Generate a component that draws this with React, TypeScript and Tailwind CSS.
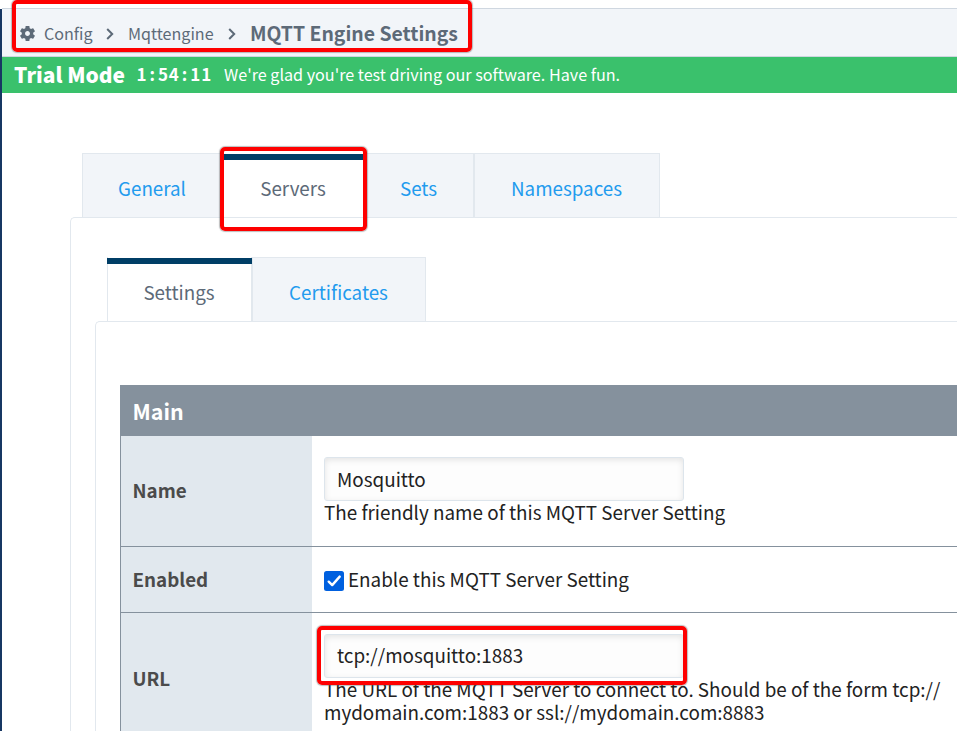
import React from "react";

const SANS = "font-['Noto_Sans_CJK_SC',sans-serif]";

function Gear() {
  return (
    <svg viewBox="0 0 24 24" className="-ml-px h-[19px] w-[19px] shrink-0" fill="#5d6a78">
      <path d="M19.14 12.94c.04-.3.06-.61.06-.94 0-.32-.02-.64-.07-.94l2.03-1.58c.18-.14.23-.41.12-.61l-1.92-3.32c-.12-.22-.37-.29-.59-.22l-2.39.96c-.5-.38-1.03-.7-1.62-.94l-.36-2.54c-.04-.24-.24-.41-.48-.41h-3.84c-.24 0-.43.17-.47.41l-.36 2.54c-.59.24-1.13.57-1.62.94l-2.39-.96c-.22-.08-.47 0-.59.22L2.74 8.87c-.12.21-.08.47.12.61l2.03 1.58c-.05.3-.09.63-.09.94s.02.64.07.94l-2.03 1.58c-.18.14-.23.41-.12.61l1.92 3.32c.12.22.37.29.59.22l2.39-.96c.5.38 1.03.7 1.62.94l.36 2.54c.05.24.24.41.48.41h3.84c.24 0 .44-.17.47-.41l.36-2.54c.59-.24 1.13-.56 1.62-.94l2.39.96c.22.08.47 0 .59-.22l1.92-3.32c.12-.22.07-.47-.12-.61l-2.01-1.58zM12 15.1c-1.7 0-3.1-1.4-3.1-3.1s1.4-3.1 3.1-3.1 3.1 1.4 3.1 3.1-1.4 3.1-3.1 3.1z" />
    </svg>
  );
}

function Chevron() {
  return (
    <svg viewBox="0 0 8 12" className="h-3 w-2 shrink-0" fill="none" stroke="#5d6a78" strokeWidth="2">
      <path d="M1.2 1 L6.2 6 L1.2 11" />
    </svg>
  );
}

function Tab({ label, width, active = false }: { label: string; width: string; active?: boolean }) {
  return (
    <div
      className={`${width} flex h-16 shrink-0 flex-col items-center border-x border-[#e2e8ee] text-[18.8px] ${
        active ? "bg-white text-[#5d6a78]" : "border-t bg-[#f2f5f9] text-[#229bee]"
      }`}
    >
      <div className={active ? "mt-px h-1.5 w-[calc(100%+2px)] bg-[#003e66]" : "h-1.5 w-full"} />
      <div className="mt-4 pr-px leading-6 whitespace-nowrap">{label}</div>
    </div>
  );
}

function Field({ value, leading }: { value: string; leading: string }) {
  return (
    <div
      className={`${leading} h-11 w-[360px] rounded-[3px] border border-[#dde5ec] bg-[#fdfdfd] pl-3 text-[18.85px] shadow-[inset_0_2px_6px_rgba(0,0,0,0.1)]`}
    >
      {value}
    </div>
  );
}

function Label({ children }: { children: React.ReactNode }) {
  return (
    <div className="flex w-[191px] shrink-0 items-center bg-[#e1e8ee] pb-px pl-[11.5px] text-[18.8px] font-bold text-[#4b4b4b]">
      {children}
    </div>
  );
}

export default function App() {
  return (
    <div className={`${SANS} relative h-[731px] w-[957px] overflow-hidden bg-white pt-2 text-[#222]`}>
      <div className="flex h-[723px]">
        <div className="mt-px w-0.5 shrink-0 bg-[#173763]" />
        <div className="w-[955px] shrink-0">
          <header className="flex h-[49px] items-center border-y border-[#cfd7e0] bg-[#f2f5f9] pt-[2px] pl-[17px] text-[#5d6a78]">
            <Gear />
            <span className="ml-[7px] w-[48px] text-[16.1px] whitespace-nowrap">Config</span>
            <span className="ml-[14px] flex"><Chevron /></span>
            <span className="ml-[14px] w-[87px] text-[16.1px] whitespace-nowrap">Mqttengine</span>
            <span className="ml-[13px] flex"><Chevron /></span>
            <span className="ml-[14px] pb-0.5 text-[19.4px] font-bold whitespace-nowrap">MQTT Engine Settings</span>
          </header>

          <div className="flex h-9 items-center bg-[#3ac16c] pb-0.5 pl-3 whitespace-nowrap text-white">
            <span className="w-[122px] text-[20.9px] leading-6 font-black">Trial Mode</span>
            <span className="flex w-[88px] text-[17px] font-bold">
              {"1:54:11".split("").map((c, i) => (
                <span key={i} className="w-[10.8px] text-center">{c}</span>
              ))}
            </span>
            <span className="text-[16.17px]">We're glad you're test driving our software. Have fun.</span>
          </div>

          <main className="pt-[60px] pl-[68px]">
            <div className="flex pl-3">
              <Tab label="General" width="w-[141px]" />
              <Tab label="Servers" width="w-[141px]" active />
              <Tab label="Sets" width="w-[110px]" />
              <Tab label="Namespaces" width="w-[186px]" />
            </div>
            <div className="h-[520px] rounded-tl-[5px] border-t border-l border-[#e2e8ee] pt-[39px] pl-6">
              <div className="flex pl-3">
                <Tab label="Settings" width="w-[145px]" active />
                <Tab label="Certificates" width="w-[174px]" />
              </div>
              <div className="h-[420px] rounded-tl-[5px] border-t border-l border-[#e2e8ee] pt-[63px] pl-6">
                <div className="border-l border-[#85919d]">
                  <div className="h-[51px] bg-[#85919d] pl-[11.5px] text-[21.4px] leading-[51px] font-bold text-white">Main</div>
                  <div className="flex h-[111px] border-b border-[#85919d]">
                    <Label>Name</Label>
                    <div className="pt-[21px] pl-3 text-[18.85px]">
                      <Field value="Mosquitto" leading="leading-[41px]" />
                      <div className="-mt-px leading-[23px] whitespace-nowrap">The friendly name of this MQTT Server Setting</div>
                    </div>
                  </div>
                  <div className="flex h-[66px] border-b border-[#85919d]">
                    <Label>Enabled</Label>
                    <div className="flex items-center pl-3 text-[18.85px]">
                      <svg viewBox="0 0 20 20" className="mt-0.5 mr-1 h-5 w-5">
                        <rect width="20" height="20" rx="2.5" fill="#0060df" />
                        <path d="M4.7 10.7 L8.2 14.1 L15.7 5.6" fill="none" stroke="white" strokeWidth="2.4" strokeLinecap="round" strokeLinejoin="round" />
                      </svg>
                      <span>Enable this MQTT Server Setting</span>
                    </div>
                  </div>
                  <div className="flex h-[132px]">
                    <Label>URL</Label>
                    <div className="pt-[21px] pl-3 text-[18.85px]">
                      <Field value="tcp://mosquitto:1883" leading="leading-[39px]" />
                      <div className="-mt-px leading-[23px] whitespace-nowrap">
                        The URL of the MQTT Server to connect to. Should be of the form tcp://
                        <br />
                        mydomain.com:1883 or ssl://mydomain.com:8883
                      </div>
                    </div>
                  </div>
                </div>
              </div>
            </div>
          </main>
        </div>
      </div>

      <div className="absolute top-0 left-3 h-[52px] w-[460px] rounded-[5px] border-[4.5px] border-[#fe0000] shadow-[0_0_1px_1px_rgba(90,90,90,0.4)]" />
      <div className="absolute top-[147px] left-[220px] h-[84px] w-[147px] rounded-[5px] border-4 border-[#fe0000] shadow-[0_0_1px_1px_rgba(90,90,90,0.4)]" />
      <div className="absolute top-[626px] left-[317px] h-[59px] w-[370px] rounded-[5px] border-4 border-[#fe0000] shadow-[0_0_1px_1px_rgba(90,90,90,0.4)]" />
    </div>
  );
}
